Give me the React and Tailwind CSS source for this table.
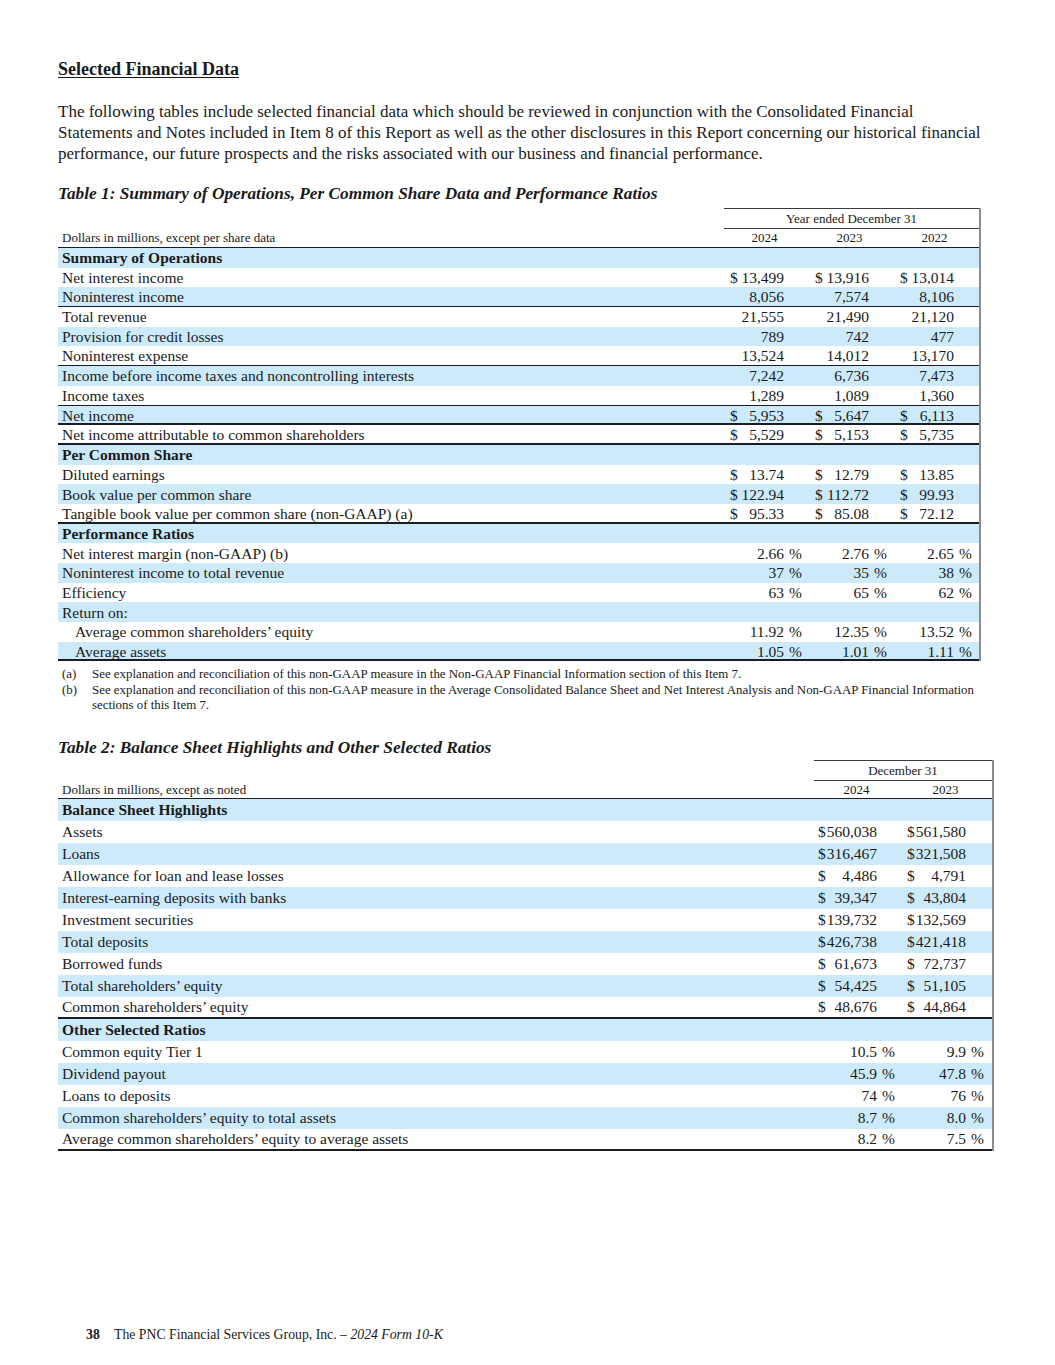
import React from "react";

const BLUE = "bg-[#cdeafa]";

const t1 = [
  { l: "Summary of Operations", b: true, bg: true },
  { l: "Net interest income", v: ["$ 13,499", "$ 13,916", "$ 13,014"] },
  { l: "Noninterest income", v: ["8,056", "7,574", "8,106"], bg: true, br: "thin" },
  { l: "Total revenue", v: ["21,555", "21,490", "21,120"] },
  { l: "Provision for credit losses", v: ["789", "742", "477"], bg: true },
  { l: "Noninterest expense", v: ["13,524", "14,012", "13,170"], br: "thin" },
  { l: "Income before income taxes and noncontrolling interests", v: ["7,242", "6,736", "7,473"], bg: true },
  { l: "Income taxes", v: ["1,289", "1,089", "1,360"], br: "thin" },
  { l: "Net income", v: ["$ 5,953", "$ 5,647", "$ 6,113"], bg: true, br: "thick" },
  { l: "Net income attributable to common shareholders", v: ["$ 5,529", "$ 5,153", "$ 5,735"], br: "thick" },
  { l: "Per Common Share", b: true, bg: true },
  { l: "Diluted earnings", v: ["$ 13.74", "$ 12.79", "$ 13.85"] },
  { l: "Book value per common share", v: ["$ 122.94", "$ 112.72", "$ 99.93"], bg: true },
  { l: "Tangible book value per common share (non-GAAP) (a)", v: ["$ 95.33", "$ 85.08", "$ 72.12"], br: "thick" },
  { l: "Performance Ratios", b: true, bg: true },
  { l: "Net interest margin (non-GAAP) (b)", v: ["2.66 %", "2.76 %", "2.65 %"] },
  { l: "Noninterest income to total revenue", v: ["37 %", "35 %", "38 %"], bg: true },
  { l: "Efficiency", v: ["63 %", "65 %", "62 %"] },
  { l: "Return on:", bg: true },
  { l: "Average common shareholders\u2019 equity", v: ["11.92 %", "12.35 %", "13.52 %"], ind: true },
  { l: "Average assets", v: ["1.05 %", "1.01 %", "1.11 %"], bg: true, ind: true, br: "thick" },
];

const t2 = [
  { l: "Balance Sheet Highlights", b: true, bg: true },
  { l: "Assets", v: ["$560,038", "$561,580"] },
  { l: "Loans", v: ["$316,467", "$321,508"], bg: true },
  { l: "Allowance for loan and lease losses", v: ["$ 4,486", "$ 4,791"] },
  { l: "Interest-earning deposits with banks", v: ["$ 39,347", "$ 43,804"], bg: true },
  { l: "Investment securities", v: ["$139,732", "$132,569"] },
  { l: "Total deposits", v: ["$426,738", "$421,418"], bg: true },
  { l: "Borrowed funds", v: ["$ 61,673", "$ 72,737"] },
  { l: "Total shareholders\u2019 equity", v: ["$ 54,425", "$ 51,105"], bg: true },
  { l: "Common shareholders\u2019 equity", v: ["$ 48,676", "$ 44,864"], br: "thick" },
  { l: "Other Selected Ratios", b: true, bg: true },
  { l: "Common equity Tier 1", v: ["10.5 %", "9.9 %"] },
  { l: "Dividend payout", v: ["45.9 %", "47.8 %"], bg: true },
  { l: "Loans to deposits", v: ["74 %", "76 %"] },
  { l: "Common shareholders\u2019 equity to total assets", v: ["8.7 %", "8.0 %"], bg: true },
  { l: "Average common shareholders\u2019 equity to average assets", v: ["8.2 %", "7.5 %"], br: "thick" },
];

function parse(s) {
  let d = false;
  let p = false;
  let n = s;
  if (n.startsWith("$")) {
    d = true;
    n = n.slice(1).trim();
  }
  if (n.endsWith("%")) {
    p = true;
    n = n.slice(0, -1).trim();
  }
  return { d, p, n };
}

function Val({ s, wide }) {
  const { d, p, n } = parse(s);
  return (
    <div className={wide ? "flex pl-[4px] pr-[8px]" : "flex pl-[6px] pr-[7px]"}>
      <span className="w-[8px]">{d ? "$" : ""}</span>
      <span className="flex-1 text-right">{n}</span>
      <span className="w-[18px] text-right">{p ? "%" : ""}</span>
    </div>
  );
}

function Row({ r, cols, h, wide }) {
  const border =
    r.br === "thick"
      ? "border-b-2 border-[#1c1c24]"
      : r.br === "thin"
      ? "border-b border-[#1c1c24]"
      : "";
  return (
    <div
      className={`grid items-center ${cols} ${h} ${r.bg ? BLUE : "bg-white"} ${border}`}
    >
      <div className={`${r.ind ? "pl-[17px]" : "pl-[4px]"} ${r.b ? "font-bold" : ""} whitespace-nowrap`}>
        {r.l}
      </div>
      {(r.v || (wide ? ["", ""] : ["", "", ""])).map((s, i) => (
        <Val key={i} s={s} wide={wide} />
      ))}
    </div>
  );
}

function Table1() {
  const cols = "grid-cols-[1fr_85px_85px_85px]";
  return (
    <div className="w-[923px] border-r-2 border-[#8c8c8c] mt-[4px] text-[15.5px] leading-[19px]">
      <div className={`grid ${cols} h-[20px] items-stretch`}>
        <div />
        <div className="col-span-3 border-t border-b border-[#3a3a44] flex items-center justify-center text-[13px]">
          Year ended December 31
        </div>
      </div>
      <div className={`grid ${cols} h-[20px] items-center text-[13px] border-b-[1.5px] border-[#1c1c24]`}>
        <div className="pl-[4px]">Dollars in millions, except per share data</div>
        <div className="text-center pr-[4px]">2024</div>
        <div className="text-center pr-[4px]">2023</div>
        <div className="text-center pr-[4px]">2022</div>
      </div>
      {t1.map((r, i) => (
        <Row key={i} r={r} cols={cols} h="h-[19.7px]" />
      ))}
    </div>
  );
}

function Table2() {
  const cols = "grid-cols-[1fr_89px_89px]";
  return (
    <div className="w-[936px] border-r-2 border-[#8c8c8c] mt-[1.5px] text-[15.5px] leading-[19px]">
      <div className={`grid ${cols} h-[20px] items-stretch`}>
        <div />
        <div className="col-span-2 border-t border-b border-[#3a3a44] flex items-center justify-center text-[13px]">
          December 31
        </div>
      </div>
      <div className={`grid ${cols} h-[19px] items-center text-[13px] border-b-[1.5px] border-[#1c1c24]`}>
        <div className="pl-[4px]">Dollars in millions, except as noted</div>
        <div className="text-center pr-[4px]">2024</div>
        <div className="text-center pr-[4px]">2023</div>
      </div>
      {t2.map((r, i) => (
        <Row key={i} r={r} cols={cols} h="h-[22px]" wide />
      ))}
    </div>
  );
}

export default function App() {
  return (
    <div className="w-[1055px] h-[1365px] bg-white text-[#1a1a1a] font-['Liberation_Serif',serif] flex flex-col pl-[58px]">
      <h1 className="mt-[59px] text-[18px] leading-[20px] font-bold underline underline-offset-[2px]">
        Selected Financial Data
      </h1>
      <p className="mt-[22px] w-[960px] text-[17px] leading-[21px]">
        The following tables include selected financial data which should be reviewed in conjunction with the Consolidated Financial
        <br />
        Statements and Notes included in Item 8 of this Report as well as the other disclosures in this Report concerning our historical financial
        <br />
        performance, our future prospects and the risks associated with our business and financial performance.
      </p>
      <h2 className="mt-[20px] text-[17.3px] leading-[20px] font-bold italic">
        Table 1: Summary of Operations, Per Common Share Data and Performance Ratios
      </h2>
      <Table1 />
      <div className="mt-[6px] text-[12.9px] leading-[15.5px] w-[960px]">
        <div className="flex">
          <span className="w-[34px] pl-[4px] shrink-0">(a)</span>
          <span className="whitespace-nowrap">See explanation and reconciliation of this non-GAAP measure in the Non-GAAP Financial Information section of this Item 7.</span>
        </div>
        <div className="flex">
          <span className="w-[34px] pl-[4px] shrink-0">(b)</span>
          <span className="whitespace-nowrap">
            See explanation and reconciliation of this non-GAAP measure in the Average Consolidated Balance Sheet and Net Interest Analysis and Non-GAAP Financial Information
            <br />
            sections of this Item 7.
          </span>
        </div>
      </div>
      <h2 className="mt-[24.5px] text-[17.3px] leading-[20px] font-bold italic">
        Table 2: Balance Sheet Highlights and Other Selected Ratios
      </h2>
      <Table2 />
      <div className="mt-auto mb-[22px] pl-[28px] flex items-baseline text-[13.75px] leading-[16px]">
        <span className="font-bold w-[28px]">38</span>
        <span>
          The PNC Financial Services Group, Inc. – <span className="italic">2024 Form 10-K</span>
        </span>
      </div>
    </div>
  );
}
